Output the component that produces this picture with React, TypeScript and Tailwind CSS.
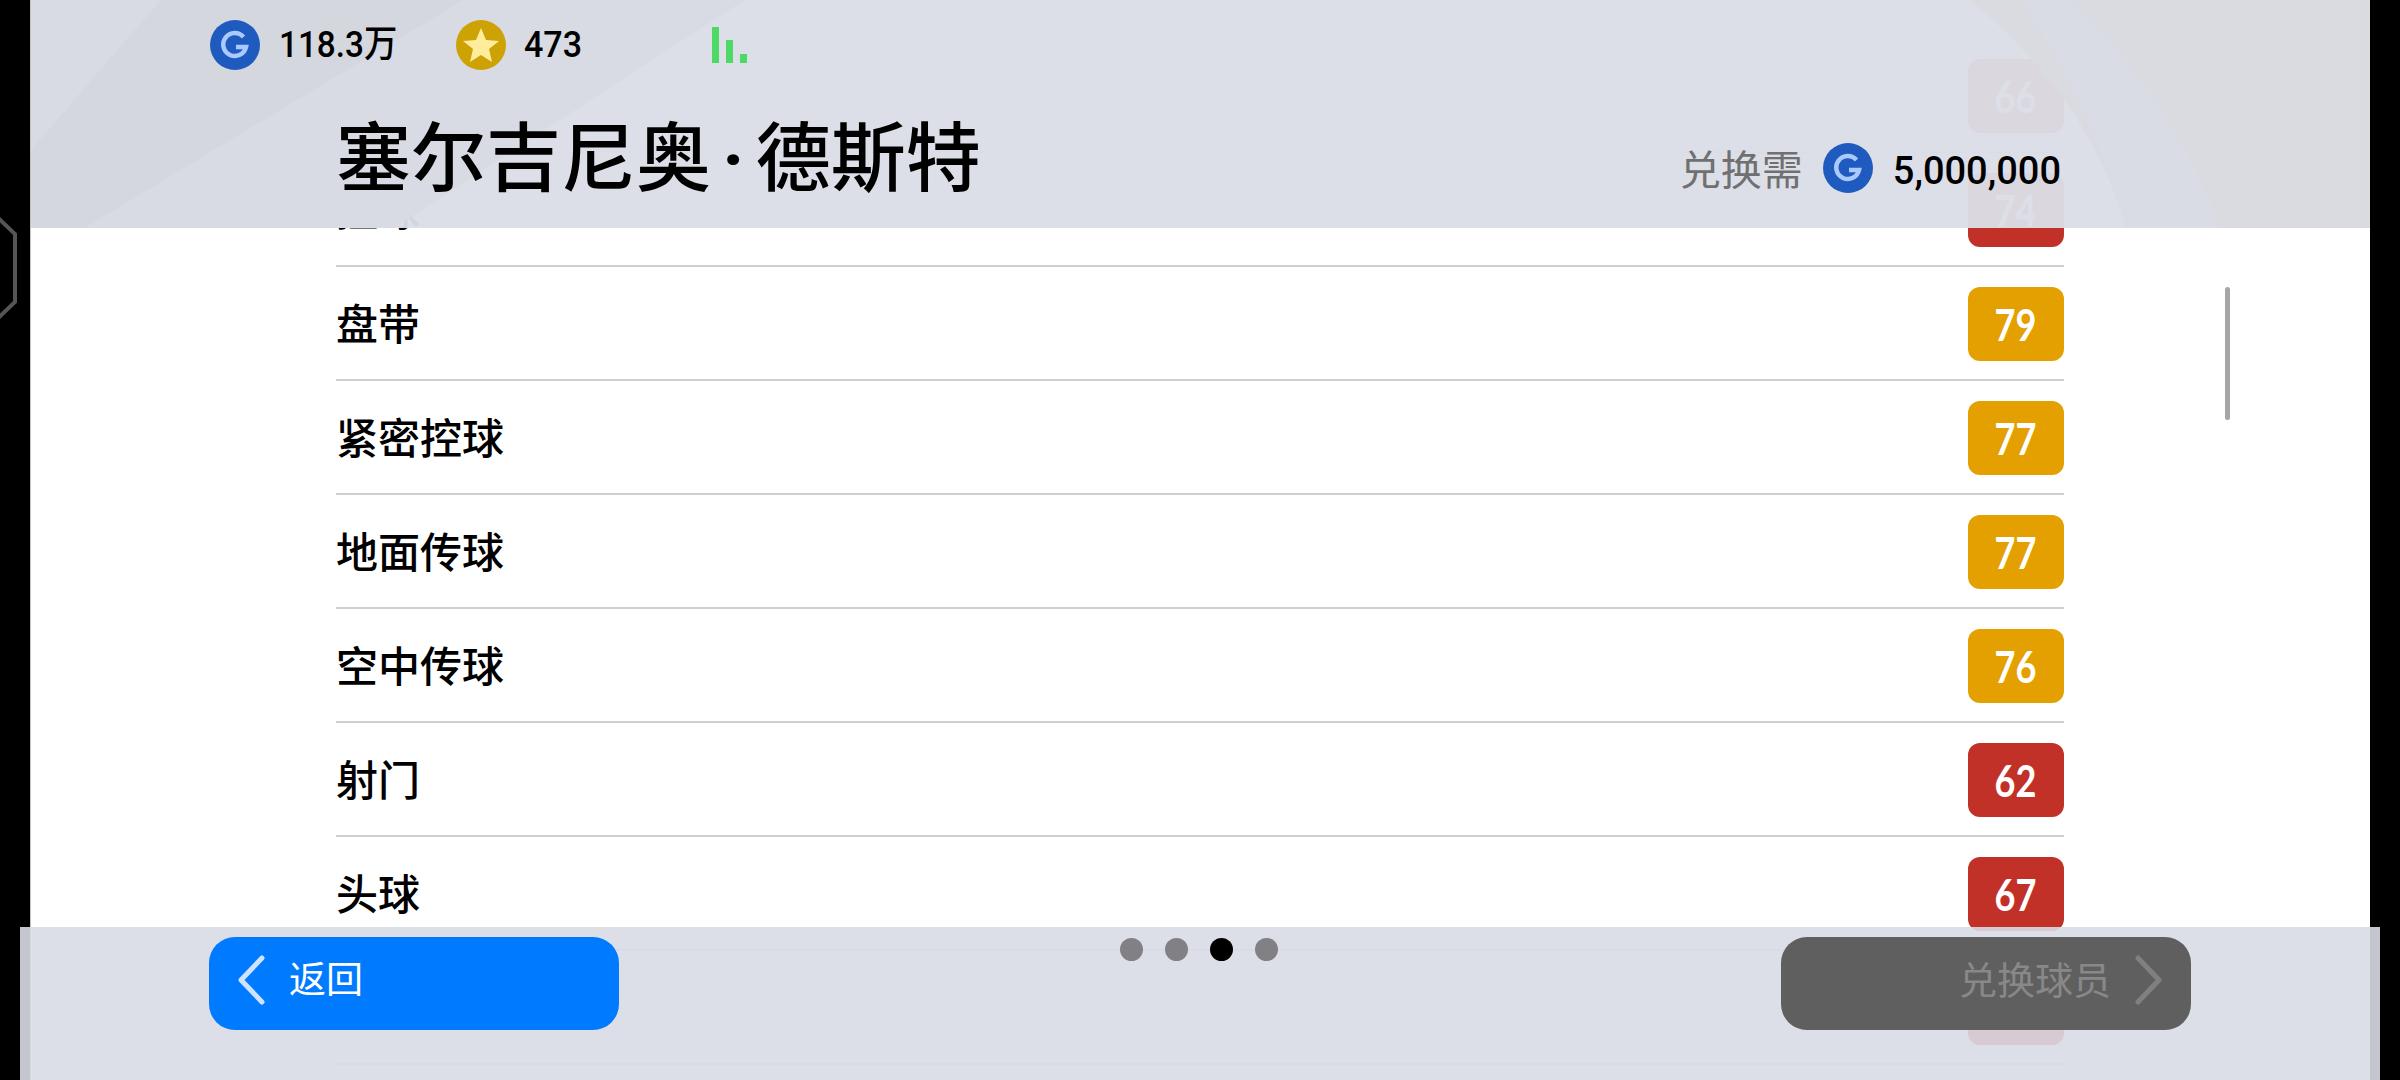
const cjk = "font-['Noto_Sans_CJK_SC',sans-serif]";

const stats = [
  { name: "攻击能力", value: 66, color: "bg-[#c23127]" },
  { name: "控球", value: 74, color: "bg-[#c23127]" },
  { name: "盘带", value: 79, color: "bg-[#e4a000]" },
  { name: "紧密控球", value: 77, color: "bg-[#e4a000]" },
  { name: "地面传球", value: 77, color: "bg-[#e4a000]" },
  { name: "空中传球", value: 76, color: "bg-[#e4a000]" },
  { name: "射门", value: 62, color: "bg-[#c23127]" },
  { name: "头球", value: 67, color: "bg-[#c23127]" },
  { name: "", value: null, color: "bg-[#c23127]" },
];

function GCoin() {
  return (
    <svg viewBox="0 0 50 50" className="h-[50px] w-[50px] shrink-0" fill="none">
      <circle cx="25" cy="25" r="25" fill="#1f5bbf" />
      <path
        d="M33.5 17 A11.5 11.5 0 1 0 36 27 H26"
        stroke="#a9c9ff"
        strokeWidth="4.5"
      />
    </svg>
  );
}

function StarCoin() {
  return (
    <svg viewBox="0 0 50 50" className="h-[50px] w-[50px] shrink-0">
      <circle cx="25" cy="25" r="25" fill="#cda205" />
      <polygon
        points="25,8 30,20 43,21 33,29 36,42 25,35 14,42 17,29 7,21 20,20"
        fill="#ffec9c"
      />
    </svg>
  );
}

function Chevron({ dir, color }: { dir: "left" | "right"; color: string }) {
  return (
    <svg viewBox="0 0 28 50" className="h-[50px] w-[28px] shrink-0" fill="none">
      <path
        d={dir === "left" ? "M25 3 L4 25 L25 47" : "M3 3 L24 25 L3 47"}
        stroke={color}
        strokeWidth="5"
        strokeLinecap="round"
        strokeLinejoin="round"
      />
    </svg>
  );
}

function HeaderBackdrop() {
  return (
    <svg
      viewBox="0 0 2340 228"
      className="absolute inset-0 h-full w-full"
      preserveAspectRatio="none"
    >
      <polygon points="0,0 433,0 54,228 0,228" fill="#d5d7de" />
      <polygon points="0,0 130,0 0,150" fill="#d9dbe2" />
      <polygon points="433,0 714,0 363,228 54,228" fill="#d8dbe3" />
      <path d="M1940 0 Q2060 100 2096 228 L2340 228 L2340 0 Z" fill="#dadbe0" />
      <path d="M2040 0 Q2150 110 2190 228 L2096 228 Q2060 100 1990 0 Z" fill="#d9dce4" />
    </svg>
  );
}

export default function App() {
  return (
    <div className={`relative flex h-[1080px] w-[2400px] justify-center overflow-hidden bg-black ${cjk}`}>
      {/* edge of the side tab */}
      <svg viewBox="0 0 20 110" className="absolute left-0 top-[214px] h-[110px] w-[20px]" fill="none">
        <path d="M-4 2 L15 20 L15 88 L-4 106" stroke="#555555" strokeWidth="4" />
      </svg>

      <div className="relative h-full w-[2340px] overflow-hidden border-l border-[#c4c4c4] bg-white">
        {/* list runs on under the header and the footer */}
        <div className="pl-[305px] pr-[306px] text-[42px] font-medium leading-[42px] text-black">
          <div className="flex h-[39px] flex-col">
            <div className="-mt-[27px]">能力</div>
          </div>
          {stats.map((s, i) => (
            <div key={i} className="flex h-[114px] items-center justify-between border-b-2 border-[#cfcfcf]">
              <span className="mb-[3px]">{s.name}</span>
              <span
                className={`mt-[2px] flex h-[74px] w-[96px] items-center justify-center rounded-xl font-['Lato',sans-serif] text-[44px] font-bold text-white ${s.color}`}
              >
                <span className="inline-block scale-x-[.82]">{s.value}</span>
              </span>
            </div>
          ))}
        </div>

        <div className="absolute right-[140px] top-[287px] h-[133px] w-[5px] rounded-full bg-[#a6a6a6]" />

        <div className="absolute inset-x-0 top-0 h-[228px] bg-[#dbdee6]/96">
          <HeaderBackdrop />
          <div className="relative flex h-full flex-col pl-[179px] pr-[305px] pt-[20px]">
            <div className="flex h-[50px] items-center font-['Roboto','Noto_Sans_CJK_SC',sans-serif] text-[37px] font-medium text-black">
              <GCoin />
              <span className="ml-[19px] mr-[2px] inline-block w-[114px] origin-left scale-x-[.9] whitespace-nowrap">118.3万</span>
              <span className="ml-[61px]">
                <StarCoin />
              </span>
              <span className="ml-[18px] inline-block origin-left scale-x-[.92]">473</span>
              <div className="ml-[125px] flex h-[36px] items-end gap-[7px]">
                <div className="h-[36px] w-[7px] bg-[#4cd964]" />
                <div className="h-[23px] w-[7px] bg-[#4cd964]" />
                <div className="h-[9px] w-[7px] bg-[#4cd964]" />
              </div>
            </div>
            <div className="ml-[126px] mt-[38px] flex items-start justify-between">
              <h1 className="text-[75px] font-medium leading-[90px] text-black">
                塞尔吉尼奥<span className="mx-[11px] font-['Roboto',sans-serif] font-bold">·</span>德斯特
              </h1>
              <div className="mt-[35px] flex h-[50px] items-center">
                <span className="text-[41px] text-[#707070]">兑换需</span>
                <span className="ml-[20px]">
                  <GCoin />
                </span>
                <span className="ml-[20px] mr-[4px] mt-[6px] font-['Roboto',sans-serif] text-[38px] font-medium text-black">
                  5,000,000
                </span>
              </div>
            </div>
          </div>
        </div>
      </div>

      <div className="absolute bottom-0 left-[20px] flex h-[153px] w-[2360px] items-start justify-between bg-[#d9dce5]/90 px-[189px] pt-[10px]">
        <button className="flex h-[93px] w-[410px] items-center rounded-[26px] bg-[#007aff] pb-[8px] pl-[28px] text-[37px] text-white">
          <Chevron dir="left" color="#cfe3ff" />
          <span className="mb-[4px] ml-[24px]">返回</span>
        </button>
        <div className="mr-[3px] mt-[1px] flex gap-[22px]">
          <div className="h-[23px] w-[23px] rounded-full bg-[#808085]" />
          <div className="h-[23px] w-[23px] rounded-full bg-[#808085]" />
          <div className="h-[23px] w-[23px] rounded-full bg-black" />
          <div className="h-[23px] w-[23px] rounded-full bg-[#808085]" />
        </div>
        <button className="flex h-[93px] w-[410px] items-center justify-end rounded-[26px] bg-[#5f5f5f] pb-[8px] pr-[28px] text-[38px] text-[#888888]">
          <span className="mb-[4px] mr-[24px]">兑换球员</span>
          <Chevron dir="right" color="#808080" />
        </button>
      </div>
    </div>
  );
}
